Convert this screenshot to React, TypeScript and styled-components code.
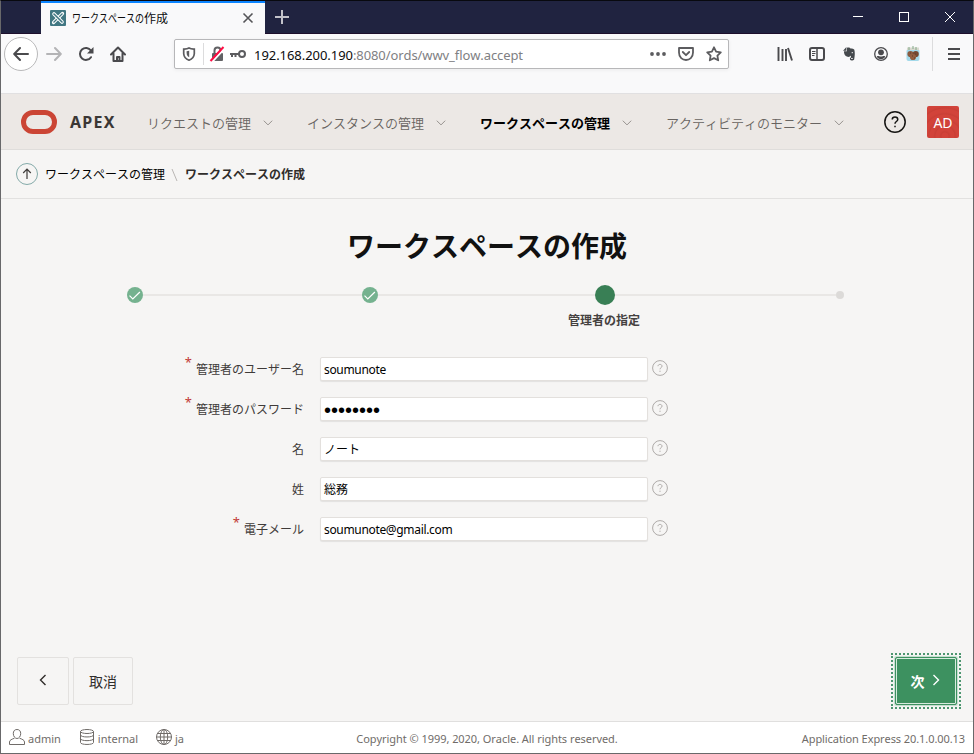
import React from "react";
import styled, { createGlobalStyle } from "styled-components";

const GlobalStyle = createGlobalStyle`
  * { box-sizing: border-box; }
  html, body { margin: 0; padding: 0; }
  body { font-family: "Noto Sans", "Noto Sans CJK JP", sans-serif; font-kerning: none; overflow: hidden; }
`;

const Window = styled.div`
  width: 974px;
  height: 754px;
  display: flex;
  flex-direction: column;
  background: #f6f5f4;
  border: 1px solid #68686a;
  border-top-color: #08090f;
`;

/* ---------- browser chrome ---------- */

const TitleBar = styled.div`
  height: 33px;
  flex: none;
  display: flex;
  background: #202340;
  border-bottom: 1px solid #1d0f2c;
`;

const Tab = styled.div`
  width: 224px;
  height: 33px;
  margin-left: 40px;
  padding: 0 11px 0 9px;
  display: flex;
  align-items: center;
  background: #f9f9fa;
  border-top: 2px solid #0a84ff;
  & > svg { margin-top: -1px; }
`;

const TabTitle = styled.div`
  flex: 1;
  display: flex;
  margin-left: 6px;
  font-size: 12px;
  line-height: 18px;
  white-space: nowrap;
  color: #0c0c0d;
`;

const Kana = styled.span`
  width: 72px;
  & > span {
    display: inline-block;
    transform: scaleX(0.75);
    transform-origin: 0 50%;
  }
`;

const NewTab = styled.div`
  width: 34px;
  display: flex;
  align-items: center;
  justify-content: center;
`;

const WindowButtons = styled.div`
  display: flex;
  margin-left: auto;
  align-items: center;
`;

const WindowButton = styled.div`
  width: 46px;
  display: flex;
  justify-content: center;
`;

const NavBar = styled.div`
  height: 60px;
  flex: none;
  display: flex;
  padding: 3px 0 0 3px;
  background: #f9f9fa;
  border-bottom: 1px solid #e1e0e1;
`;

const BackButton = styled.div`
  width: 34px;
  height: 34px;
  display: flex;
  align-items: center;
  justify-content: center;
  background: #fff;
  border: 1px solid #b9b9ba;
  border-radius: 50%;
`;

const ToolIcon = styled.div<{ $w?: number }>`
  width: ${(p) => p.$w ?? 32}px;
  height: 34px;
  display: flex;
  align-items: center;
  justify-content: center;
`;

const UrlBar = styled.div`
  width: 555px;
  height: 30px;
  margin: 2px 0 0 40px;
  display: flex;
  align-items: center;
  background: #fff;
  border: 1px solid #b7b7b9;
  border-radius: 2px;
  box-shadow: 0 1px 4px rgba(0, 0, 0, 0.06);
`;

const UrlDivider = styled.div`
  width: 1px;
  height: 22px;
  background: #dcdcdd;
`;

const Url = styled.div`
  flex: 1;
  margin: 2px 0 0 8px;
  font-size: 13px;
  line-height: 20px;
  letter-spacing: -0.05px;
  color: #0c0c0d;
  & > span { color: #808083; letter-spacing: -0.09px; }
`;

const UrlIcon = styled.div<{ $w: number }>`
  width: ${(p) => p.$w}px;
  display: flex;
  justify-content: center;
`;

const Extensions = styled.div`
  display: flex;
  margin-left: auto;
`;

const MenuButton = styled(ToolIcon)`
  width: 41px;
  padding-left: 2px;
  border-left: 1px solid #dcdcdd;
`;

/* ---------- APEX page ---------- */

const Header = styled.header`
  height: 56px;
  flex: none;
  display: flex;
  align-items: center;
  padding: 0 14px 0 20px;
  background: #ece8e5;
  border-bottom: 1px solid #dfdddb;
`;

const Logo = styled.div`
  width: 36px;
  height: 24px;
  border: 5px solid #cb4535;
  border-radius: 12px;
`;

const Brand = styled.div`
  width: 65px;
  margin-left: 13px;
  font-size: 16px;
  line-height: 24px;
  font-weight: 700;
  letter-spacing: 1.3px;
  color: #3b3735;
`;

const Menu = styled.nav`
  display: flex;
  margin: 2px 0 0 12px;
  gap: 34px;
`;

const MenuItem = styled.div<{ $active?: boolean }>`
  display: flex;
  align-items: center;
  gap: 12px;
  font-size: 13px;
  line-height: 20px;
  white-space: nowrap;
  font-weight: ${(p) => (p.$active ? 700 : 350)};
  color: ${(p) => (p.$active ? "#000" : "#686461")};
`;

const HeaderTools = styled.div`
  display: flex;
  align-items: center;
  margin-left: auto;
  gap: 21px;
`;

const Avatar = styled.div`
  width: 32px;
  height: 32px;
  border-radius: 2px;
  font-size: 14px;
  line-height: 33px;
  text-align: center;
  color: #fff;
  background: repeating-radial-gradient(circle at 18px 30px, #d2433a 0, #d2433a 3px, #c93f36 4px, #d2433a 6px);
`;

const Breadcrumb = styled.div`
  height: 49px;
  flex: none;
  display: flex;
  align-items: center;
  padding-left: 15px;
  font-size: 12px;
  line-height: 18px;
  border-bottom: 1px solid #e2e1e0;
`;

const UpButton = styled.div`
  width: 22px;
  height: 22px;
  display: flex;
  align-items: center;
  justify-content: center;
  border: 1px solid #84aaa9;
  border-radius: 50%;
`;

const Crumb = styled.span<{ $current?: boolean }>`
  margin: 2px 0 0 7px;
  color: ${(p) => (p.$current ? "#302d2b" : "#000")};
  font-weight: ${(p) => (p.$current ? 700 : 400)};
`;

const CrumbSlash = styled.svg`
  margin: 2px 0 0 6px;
`;

const Main = styled.main`
  flex: 1;
  display: flex;
  flex-direction: column;
`;

const Title = styled.h1`
  margin: 27px 0 0;
  font-size: 28px;
  line-height: 40px;
  text-align: center;
  font-weight: 700;
  color: #111;
`;

const Steps = styled.div`
  display: flex;
  align-items: center;
  height: 20px;
  margin: 19px 123px 0 124px;
`;

const Step = styled.div`
  position: relative;
  width: 20px;
  height: 20px;
  display: flex;
  align-items: center;
  justify-content: center;
`;

const StepDot = styled.div<{ $size: number; $color: string }>`
  width: ${(p) => p.$size}px;
  height: ${(p) => p.$size}px;
  display: flex;
  border-radius: 50%;
  background: ${(p) => p.$color};
`;

const StepLine = styled.div`
  flex: 1;
  height: 2px;
  margin: 0 -6px 0 -2px;
  background: #e9e7e5;
`;

const StepLabel = styled.div`
  position: absolute;
  top: 27px;
  left: -31px;
  width: 80px;
  font-size: 12px;
  line-height: 18px;
  text-align: center;
  font-weight: 700;
  color: #45413f;
`;

const Form = styled.div`
  display: flex;
  flex-direction: column;
  gap: 16px;
  margin: 52px 0 0 0;
`;

const Row = styled.div`
  display: flex;
  height: 24px;
`;

const Label = styled.label`
  width: 303px;
  margin-right: 16px;
  display: flex;
  justify-content: flex-end;
  font-size: 12px;
  line-height: 26px;
  color: #3f3b39;
`;

const Required = styled.span`
  margin: -5px 4px 0 0;
  font-size: 13px;
  line-height: 21px;
  color: #c23a35;
`;

const Field = styled.div<{ $secret?: boolean }>`
  width: 328px;
  height: 24px;
  padding-left: 3px;
  font-family: ${(p) => (p.$secret ? '"Liberation Sans", sans-serif' : "inherit")};
  font-size: ${(p) => (p.$secret ? "20px" : "12px")};
  line-height: 24px;
  color: #000;
  background: #fff;
  border: 1px solid #e3e0dd;
  border-radius: 2px;
  box-shadow: 0 1px 1px rgba(0, 0, 0, 0.08);
`;

const Latin = styled.span`
  letter-spacing: -0.33px;
`;

const FieldHelp = styled.div`
  margin: 3px 0 0 4px;
  height: 16px;
  display: flex;
`;

const Actions = styled.div`
  display: flex;
  align-items: center;
  gap: 4px;
  height: 56px;
  margin: auto 12px 12px 16px;
`;

const Button = styled.div<{ $w: number }>`
  width: ${(p) => p.$w}px;
  height: 48px;
  display: flex;
  align-items: center;
  justify-content: center;
  font-size: 14px;
  line-height: 20px;
  color: #302d2b;
  border: 1px solid #e3e1df;
  border-radius: 2px;
  & > svg { margin: -2px 1px 0 0; }
`;

const ButtonText = styled.span`
  margin-top: 2px;
`;

const NextFocus = styled.div`
  width: 70px;
  height: 56px;
  margin-left: auto;
  padding: 2px;
  border: 2px dotted #4d9670;
`;

const NextButton = styled.div`
  height: 48px;
  display: flex;
  align-items: center;
  justify-content: center;
  gap: 7px;
  padding-right: 2px;
  font-size: 14px;
  font-weight: 700;
  line-height: 20px;
  color: #fff;
  background: #3d9160;
  border: 1px solid #3d9160;
  border-radius: 2px;
  box-shadow: inset 0 0 0 1px #d5eadd, 0 0 1px 1px #bfdccb;
  & > svg { margin-top: -2px; }
`;

const Footer = styled.footer`
  height: 32px;
  flex: none;
  display: grid;
  grid-template-columns: 1fr auto 1fr;
  align-items: center;
  padding: 3px 8px 0;
  font-size: 11px;
  line-height: 16px;
  color: #706c69;
  background: #fff;
  border-top: 1px solid #e0dfde;
`;

const FooterGroup = styled.div`
  display: flex;
`;

const FooterItem = styled.div`
  display: flex;
  align-items: center;
  gap: 3px;
  margin-right: 18px;
  & svg { margin-top: -4px; }
`;

const Copyright = styled.div`
  letter-spacing: -0.05px;
`;

const Version = styled.div`
  text-align: right;
  letter-spacing: -0.08px;
`;

const Chevron = () => (
  <svg width="10" height="6" viewBox="0 0 10 6" fill="none" stroke="#96918e">
    <path d="M.8.7 5 4.9 9.2.7" />
  </svg>
);

const Help = ({ size, color, width = 1 }: { size: number; color: string; width?: number }) => (
  <svg width={size} height={size} viewBox="0 0 16 16" fill="none" stroke={color} strokeWidth={width}>
    <circle cx="8" cy="8" r="7.4" />
    <path d="M6 6.200c0-2.400 4-2.400 4 0 0 1.500-2 1.400-2 3.100M8 10.700v1.200" />
  </svg>
);

const menu = [
  { label: "リクエストの管理" },
  { label: "インスタンスの管理" },
  { label: "ワークスペースの管理", active: true },
  { label: "アクティビティのモニター" },
];

const fields = [
  { label: "管理者のユーザー名", value: "soumunote", required: true, latin: true },
  { label: "管理者のパスワード", value: "••••••••", required: true, secret: true },
  { label: "名", value: "ノート" },
  { label: "姓", value: "総務" },
  { label: "電子メール", value: "soumunote@gmail.com", required: true, latin: true },
];

const DoneStep = () => (
  <Step>
    <StepDot $size={16} $color="#75b28f">
      <svg width="16" height="16" fill="none" stroke="#fff" strokeWidth="1.2">
        <path d="m2.500 8.700 3.300 3.300L12.900 5" />
      </svg>
    </StepDot>
  </Step>
);

const BrowserChrome = () => (
  <>
    <TitleBar>
      <Tab>
        <svg width="16" height="16" viewBox="0 0 16 16" fill="none">
          <rect width="16" height="16" rx="1" fill="#417782" />
          <path d="m3.500 12.500 9-9" stroke="#fff" strokeWidth="3.200" strokeLinecap="round" />
          <path d="m3.500 12.500 9-9" stroke="#417782" strokeWidth="1.200" />
          <path d="m4 4 8 8" stroke="#fff" strokeWidth="3.600" strokeLinecap="round" />
          <path d="m4 4 8 8" stroke="#417782" strokeWidth="1.600" strokeLinecap="round" />
        </svg>
        <TabTitle>
          <Kana><span>ワークスペースの</span></Kana>
          <span>作成</span>
        </TabTitle>
        <svg width="12" height="12" stroke="#555558" strokeWidth="1.600">
          <path d="m1.500 1.500 9 9M10.500 1.500l-9 9" />
        </svg>
      </Tab>
      <NewTab>
        <svg width="14" height="14" stroke="#c2c2ca" strokeWidth="2"><path d="M7 0v14M0 7h14" /></svg>
      </NewTab>
      <WindowButtons>
        <WindowButton>
          <svg width="10" height="10" stroke="#fff"><path d="M0 4.500h10" /></svg>
        </WindowButton>
        <WindowButton>
          <svg width="10" height="10" fill="none" stroke="#fff"><rect x=".5" y=".5" width="9" height="9" /></svg>
        </WindowButton>
        <WindowButton>
          <svg width="10" height="10" stroke="#fff"><path d="m0 0 10 10M10 0 0 10" /></svg>
        </WindowButton>
      </WindowButtons>
    </TitleBar>
    <NavBar>
      <BackButton>
        <svg width="16" height="16" fill="none" stroke="#4a4a4d" strokeWidth="2" strokeLinecap="round" strokeLinejoin="round">
          <path d="M15 8H1.500M7 2 1.200 8 7 14" />
        </svg>
      </BackButton>
      <ToolIcon>
        <svg width="16" height="16" fill="none" stroke="#b4b4b6" strokeWidth="2" strokeLinecap="round" strokeLinejoin="round">
          <path d="M1 8h13.500M9 2l5.800 6L9 14" />
        </svg>
      </ToolIcon>
      <ToolIcon>
        <svg width="16" height="16" fill="none" stroke="#4a4a4d" strokeWidth="2" strokeLinecap="round">
          <path d="M13 11.200A6 6 0 1 1 12.900 4.500" />
          <path d="M15.500 1v6.500H9z" fill="#4a4a4d" stroke="none" />
        </svg>
      </ToolIcon>
      <ToolIcon>
        <svg width="16" height="16" fill="none" stroke="#4a4a4d" strokeWidth="2" strokeLinecap="round" strokeLinejoin="round">
          <path d="m1 8.500 7-7 7 7M3.500 7.500V15h9V7.500M7 15v-4h2.500v4" />
        </svg>
      </ToolIcon>
      <UrlBar>
        <UrlIcon $w={28}>
          <svg width="14" height="14" fill="none" stroke="#5c5c5f" strokeWidth="1.700">
            <path d="M7 .9C5 2 3 2 1.700 2.100v4.600C2 10.300 4 12.200 7 13.200c3-1 5-2.900 5.300-6.500V2.100C11 2 9 2 7 .9z" />
            <path d="M7.200 3.800v6.400C5.400 9.400 4.700 8 4.600 6V4.300z" fill="#5c5c5f" stroke="none" />
          </svg>
        </UrlIcon>
        <UrlDivider />
        <UrlIcon $w={26}>
          <svg width="16" height="16" viewBox="0 0 16 16" fill="none">
            <path d="M5.500 8V4.500a3 3 0 0 1 6 0V8" stroke="#626265" strokeWidth="2" />
            <rect x="3" y="7" width="11" height="8" rx="1" fill="#626265" />
            <path d="M3 16 16 2" stroke="#fff" strokeWidth="2" />
            <path d="M1.500 15 14.500 1" stroke="#ff0c43" strokeWidth="2" />
          </svg>
        </UrlIcon>
        <svg width="16" height="10" fill="none" stroke="#5c5c5f" strokeWidth="2">
          <circle cx="12" cy="5" r="3" />
          <path d="M9 5H0M2 5v3M5.500 5v3" />
        </svg>
        <Url>192.168.200.190<span>:8080/ords/wwv_flow.accept</span></Url>
        <UrlIcon $w={28}>
          <svg width="16" height="4" fill="#5c5c5f"><circle cx="2" cy="2" r="1.900" /><circle cx="8" cy="2" r="1.900" /><circle cx="14" cy="2" r="1.900" /></svg>
        </UrlIcon>
        <UrlIcon $w={28}>
          <svg width="16" height="14" fill="none" stroke="#5c5c5f" strokeWidth="1.800" strokeLinecap="round" strokeLinejoin="round">
            <path d="M1 1h14v4.500C15 15.500 1 15.500 1 5.500zM4.800 5 8 8.200 11.200 5" />
          </svg>
        </UrlIcon>
        <UrlIcon $w={28}>
          <svg width="16" height="16" fill="none" stroke="#5c5c5f" strokeWidth="1.800" strokeLinejoin="round">
            <path d="m8 1.300 2.100 4.300 4.700.7-3.400 3.300.8 4.700L8 12.100l-4.200 2.200.8-4.700-3.400-3.300 4.700-.7z" />
          </svg>
        </UrlIcon>
      </UrlBar>
      <Extensions>
        <ToolIcon>
          <svg width="16" height="14" stroke="#4a4a4d" strokeWidth="1.900">
            <path d="M1.500 0v14M5.500 2v12M9 2v12M11 1l4 12.500" />
          </svg>
        </ToolIcon>
        <ToolIcon>
          <svg width="16" height="14" fill="none" stroke="#4a4a4d">
            <rect x="1" y="1" width="14" height="12" rx="2" strokeWidth="2" />
            <path d="M8 1v12" strokeWidth="1.500" /><path d="M3 4.500h3.500M3 6.500h3.500M3 8.500h2.500" />
          </svg>
        </ToolIcon>
        <ToolIcon>
          <svg width="13" height="14" viewBox="0 0 14 15" fill="#45494d">
            <path d="M4.300.7C6 0 7.500.5 8 1.500c2 .1 3.800.3 4.200 1.500.8 3 .6 6.500-.1 10-.2 1.300-1.200 1.700-2.700 1.500C7.700 14.300 7.200 13 7.500 12l1.200-1.200-.4-1.600c-.4 1.300-2.100 1.700-3.500 1.300C2 10 1 7 1 4.500h3.300z" />
            <path d="M3.700 0v4H0z" /><path d="M8.700 12.300h1.800M9.300 6.100h1.500" stroke="#f9f9fa" />
          </svg>
        </ToolIcon>
        <ToolIcon>
          <svg width="14" height="14" fill="#4a4a4d">
            <circle cx="7" cy="7" r="6.300" fill="none" stroke="#4a4a4d" strokeWidth="1.300" />
            <circle cx="7" cy="5.300" r="2.900" /><path d="M2.800 9.500C4 8.500 5 9.500 7 9.500s3-1 4.200 0C10 13 4 13 2.800 9.500z" />
          </svg>
        </ToolIcon>
        <ToolIcon>
          <svg width="14" height="16">
            <rect x=".5" y="3" width="13" height="12" rx="2" fill="#a3d9ea" />
            <path d="M1 1.500h12V4H1z" fill="#d8d9cf" /><path d="M3 1v3M7 0v3M10 1v3" stroke="#82a988" />
            <circle cx="4.500" cy="8" r="3.100" fill="#8b5b40" /><circle cx="9.700" cy="8" r="3.100" fill="#754831" />
            <circle cx="7" cy="11" r="3.100" fill="#925e40" />
            <path d="M4 7h1M9 8h1M6 10h1M8 12h1" stroke="#5c3c2c" />
          </svg>
        </ToolIcon>
        <ToolIcon $w={3} />
        <MenuButton>
          <svg width="12" height="12" stroke="#4a4a4d" strokeWidth="2"><path d="M0 1h12M0 6h12M0 11h12" /></svg>
        </MenuButton>
      </Extensions>
    </NavBar>
  </>
);

export default function App() {
  return (
    <Window>
      <GlobalStyle />
      <BrowserChrome />
      <Header>
        <Logo />
        <Brand>APEX</Brand>
        <Menu>
          {menu.map((m) => (
            <MenuItem key={m.label} $active={m.active}>{m.label}<Chevron /></MenuItem>
          ))}
        </Menu>
        <HeaderTools>
          <Help size={22} color="#161513" width={1.1} />
          <Avatar>AD</Avatar>
        </HeaderTools>
      </Header>
      <Breadcrumb>
        <UpButton>
          <svg width="10" height="12" fill="none" stroke="#3f3b39" strokeWidth="1.200"><path d="M5 11V1.500M1.200 5 5 1.200 8.800 5" /></svg>
        </UpButton>
        <Crumb>ワークスペースの管理</Crumb>
        <CrumbSlash width="7" height="12" stroke="#b9b6b4"><path d="m1 0 5 12" /></CrumbSlash>
        <Crumb $current>ワークスペースの作成</Crumb>
      </Breadcrumb>
      <Main>
        <Title>ワークスペースの作成</Title>
        <Steps>
          <DoneStep />
          <StepLine />
          <DoneStep />
          <StepLine />
          <Step>
            <StepDot $size={20} $color="#397f55" />
            <StepLabel>管理者の指定</StepLabel>
          </Step>
          <StepLine />
          <Step><StepDot $size={8} $color="#dcdad8" /></Step>
        </Steps>
        <Form>
          {fields.map((f) => (
            <Row key={f.label}>
              <Label>{f.required && <Required>*</Required>}{f.label}</Label>
              <Field $secret={f.secret}>{f.latin ? <Latin>{f.value}</Latin> : f.value}</Field>
              <FieldHelp><Help size={16} color="#aeaaa8" /></FieldHelp>
            </Row>
          ))}
        </Form>
        <Actions>
          <Button $w={52}>
            <svg width="8" height="12" fill="none" stroke="#302d2b" strokeWidth="1.400"><path d="M6.500 1 1.500 6l5 5" /></svg>
          </Button>
          <Button $w={60}><ButtonText>取消</ButtonText></Button>
          <NextFocus>
            <NextButton>
              <ButtonText>次</ButtonText>
              <svg width="8" height="12" fill="none" stroke="#fff" strokeWidth="1.400"><path d="m1.500 1 5 5-5 5" /></svg>
            </NextButton>
          </NextFocus>
        </Actions>
      </Main>
      <Footer>
        <FooterGroup>
          <FooterItem>
            <svg width="16" height="16" fill="none" stroke="#706c69">
              <path d="M8 .5c2.600 0 3.700 1.700 3.700 4.200S10 9.500 8 9.500 4.300 7.200 4.300 4.700 5.400.5 8 .5zM5.500 9.200C3 10.200.5 11 .5 13v2.500h15V13c0-2-2.500-2.800-5-3.800" />
            </svg>
            admin
          </FooterItem>
          <FooterItem>
            <svg width="16" height="16" fill="none" stroke="#706c69">
              <ellipse cx="8" cy="2.500" rx="6.500" ry="2" />
              <path d="M1.500 2.500v11c0 2.600 13 2.600 13 0v-11M1.500 6c0 2.600 13 2.600 13 0M1.500 9.700c0 2.600 13 2.600 13 0" />
            </svg>
            internal
          </FooterItem>
          <FooterItem>
            <svg width="16" height="16" fill="none" stroke="#706c69">
              <circle cx="8" cy="8" r="7.500" /><ellipse cx="8" cy="8" rx="3.700" ry="7.500" />
              <path d="M8 .5v15M.5 8h15M1.500 4.500h13M1.500 11.500h13" />
            </svg>
            ja
          </FooterItem>
        </FooterGroup>
        <Copyright>Copyright © 1999, 2020, Oracle. All rights reserved.</Copyright>
        <Version>Application Express 20.1.0.00.13</Version>
      </Footer>
    </Window>
  );
}
